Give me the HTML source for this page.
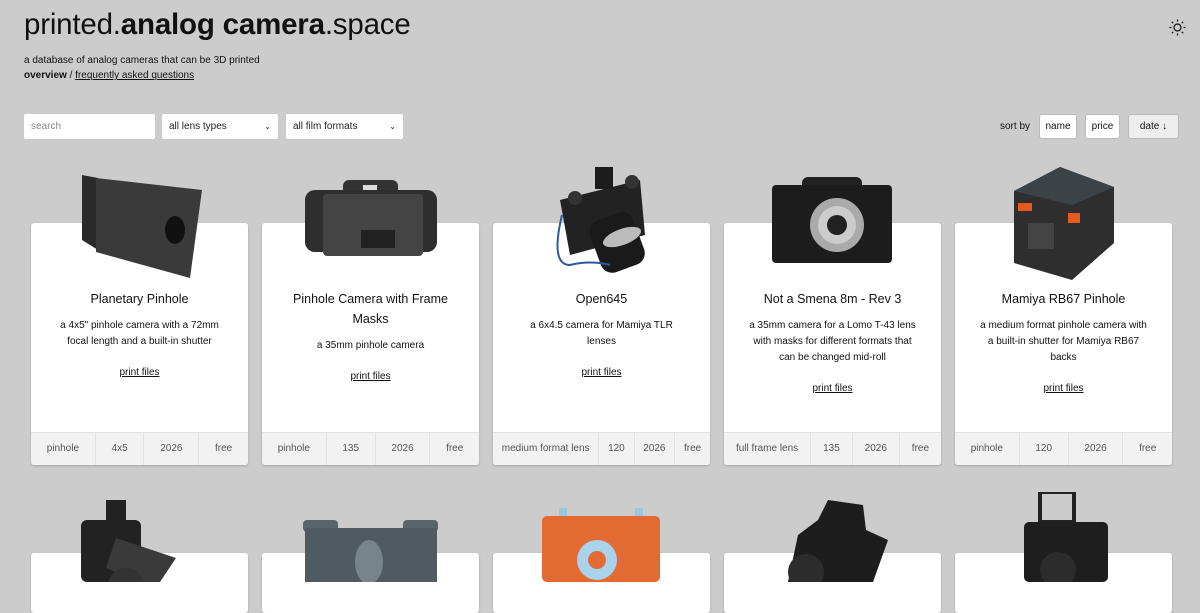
<!DOCTYPE html>
<html><head><meta charset="utf-8">
<style>
*{box-sizing:border-box;margin:0;padding:0}
body{width:1200px;height:582px;overflow:hidden;background:#cccccc;font-family:"Liberation Sans",sans-serif;color:#111;position:relative}
h1{position:absolute;left:24px;top:8px;font-size:29.5px;font-weight:normal;letter-spacing:-0.2px;color:#111}
h1 b{font-weight:bold}
.sub{position:absolute;left:24px;top:55px;font-size:10px}
.nav{position:absolute;left:24px;top:70px;font-size:10px}
.nav a{color:#111}
.in{position:absolute;top:114px;height:25px;background:#fff;border-radius:2px;font-size:10px;line-height:25px;padding-left:7px;color:#222}
.in.s{color:#888}
.in .ch{position:absolute;right:7px;top:0;font-size:8px}
.sort{position:absolute;top:114px;height:25px;font-size:10px;line-height:25px}
.btn{position:absolute;top:114px;height:25px;background:#fff;border-radius:3px;font-size:10px;line-height:23px;text-align:center;border:1px solid #bbb}
.card{position:absolute;width:217px;background:#fff;border-radius:3px;box-shadow:0 1px 2px rgba(0,0,0,.2)}
.r1{top:223px;height:242px}
.r2{top:553px;height:60px}
.t{position:absolute;left:10px;right:10px;top:66px;text-align:center;font-size:12.5px;line-height:20px}
.d{text-align:center;font-size:10px;line-height:16px;margin-top:9px;padding:0 14px}
.p{text-align:center;font-size:10px;margin-top:13px}
.p a{color:#111}
.f{position:absolute;left:0;right:0;bottom:0;height:33px;background:#f2f2f2;border-top:1px solid #e2e2e2;display:flex;font-size:10px;color:#555;border-radius:0 0 3px 3px}
.f span{flex:auto;text-align:center;line-height:31px;border-left:1px solid #e2e2e2}
.f span:first-child{border-left:none}
svg.cam{position:absolute}
</style></head><body>
<h1>printed.<b>analog camera</b>.space</h1>
<div class="sub">a database of analog cameras that can be 3D printed</div>
<div class="nav"><b>overview</b> / <a href="#">frequently asked questions</a></div>
<svg style="position:absolute;left:1169px;top:19px" width="17" height="17" viewBox="0 0 17 17"><circle cx="8.5" cy="8.5" r="3.5" fill="none" stroke="#111" stroke-width="1.2"/><g stroke="#111" stroke-width="1.2"><path d="M8.5 0.5v2M8.5 14.5v2M0.5 8.5h2M14.5 8.5h2M2.8 2.8l1.4 1.4M12.8 12.8l1.4 1.4M2.8 14.2l1.4-1.4M12.8 4.2l1.4-1.4"/></g></svg>
<div class="in s" style="left:24px;width:131px">search</div>
<div class="in" style="left:162px;width:116px">all lens types<span class="ch">&#8964;</span></div>
<div class="in" style="left:286px;width:117px">all film formats<span class="ch">&#8964;</span></div>
<div class="sort" style="left:1000px">sort by</div>
<div class="btn" style="left:1039px;width:38px">name</div>
<div class="btn" style="left:1085px;width:35px">price</div>
<div class="btn" style="left:1128px;width:51px;background:#eee">date &#8595;</div>

<div class="card r1" style="left:31px"><div class="t">Planetary Pinhole<div class="d">a 4x5" pinhole camera with a 72mm focal length and a built-in shutter</div><div class="p"><a href="#">print files</a></div></div><div class="f"><span>pinhole</span><span>4x5</span><span>2026</span><span>free</span></div></div>
<div class="card r1" style="left:262px"><div class="t" style="left:28px;right:28px">Pinhole Camera with Frame Masks<div class="d">a 35mm pinhole camera</div><div class="p"><a href="#">print files</a></div></div><div class="f"><span>pinhole</span><span>135</span><span>2026</span><span>free</span></div></div>
<div class="card r1" style="left:493px"><div class="t">Open645<div class="d">a 6x4.5 camera for Mamiya TLR lenses</div><div class="p"><a href="#">print files</a></div></div><div class="f"><span>medium format lens</span><span>120</span><span>2026</span><span>free</span></div></div>
<div class="card r1" style="left:724px"><div class="t">Not a Smena 8m - Rev 3<div class="d">a 35mm camera for a Lomo T-43 lens with masks for different formats that can be changed mid-roll</div><div class="p"><a href="#">print files</a></div></div><div class="f"><span>full frame lens</span><span>135</span><span>2026</span><span>free</span></div></div>
<div class="card r1" style="left:955px"><div class="t">Mamiya RB67 Pinhole<div class="d">a medium format pinhole camera with a built-in shutter for Mamiya RB67 backs</div><div class="p"><a href="#">print files</a></div></div><div class="f"><span>pinhole</span><span>120</span><span>2026</span><span>free</span></div></div>

<div class="card r2" style="left:31px"></div>
<div class="card r2" style="left:262px"></div>
<div class="card r2" style="left:493px"></div>
<div class="card r2" style="left:724px"></div>
<div class="card r2" style="left:955px"></div>

<svg class="cam" style="left:80px;top:170px" width="126" height="108"><polygon points="2,5 18,8 18,80 2,70" fill="#2a2a2a"/><polygon points="16,8 122,20 110,108 16,82" fill="#3a3a3a"/><ellipse cx="95" cy="60" rx="10" ry="14" fill="#111"/></svg>
<svg class="cam" style="left:303px;top:180px" width="136" height="80"><rect x="40" y="0" width="55" height="20" rx="6" fill="#333"/><rect x="60" y="5" width="14" height="8" fill="#ddd"/><rect x="2" y="10" width="132" height="62" rx="10" fill="#2e2e2e"/><rect x="20" y="14" width="100" height="62" rx="4" fill="#444"/><rect x="58" y="50" width="34" height="18" fill="#222"/></svg>
<svg class="cam" style="left:550px;top:165px" width="110" height="112"><polygon points="10,35 90,15 95,70 20,90" fill="#222"/><rect x="45" y="2" width="18" height="22" fill="#1c1c1c"/><circle cx="25" cy="33" r="7" fill="#333"/><circle cx="82" cy="17" r="7" fill="#333"/><rect x="44" y="50" width="46" height="55" rx="12" fill="#1a1a1a" transform="rotate(-20 67 77)"/><ellipse cx="72" cy="72" rx="20" ry="8" fill="#bbb" transform="rotate(-20 72 72)"/><path d="M12 50 Q0 100 20 100 Q40 95 60 100" fill="none" stroke="#2c5aa0" stroke-width="2"/></svg>
<svg class="cam" style="left:772px;top:177px" width="120" height="92"><rect x="30" y="0" width="60" height="18" rx="6" fill="#222"/><rect x="0" y="8" width="120" height="78" rx="4" fill="#1c1c1c"/><circle cx="65" cy="48" r="27" fill="#aaa"/><circle cx="65" cy="48" r="19" fill="#ccc"/><circle cx="65" cy="48" r="10" fill="#222"/></svg>
<svg class="cam" style="left:1010px;top:163px" width="106" height="118"><polygon points="4,28 50,4 104,24 104,80 62,117 4,100" fill="#2e2e2e"/><polygon points="4,28 50,4 104,24 62,42" fill="#3b4346"/><rect x="8" y="40" width="14" height="8" fill="#e85a1a"/><rect x="58" y="50" width="12" height="10" fill="#e85a1a"/><rect x="18" y="60" width="26" height="26" fill="#444"/></svg>
<svg class="cam" style="left:76px;top:498px" width="110" height="84"><rect x="30" y="2" width="20" height="28" fill="#222"/><rect x="5" y="22" width="60" height="62" rx="6" fill="#222"/><polygon points="40,40 100,60 80,90 30,70" fill="#3a3a3a"/><circle cx="50" cy="88" r="18" fill="#333"/></svg>
<svg class="cam" style="left:303px;top:520px" width="136" height="62"><rect x="0" y="0" width="35" height="12" rx="4" fill="#58656a"/><rect x="100" y="0" width="35" height="12" rx="4" fill="#58656a"/><rect x="2" y="8" width="132" height="54" fill="#4f5b60"/><ellipse cx="66" cy="42" rx="14" ry="22" fill="#77848a"/></svg>
<svg class="cam" style="left:541px;top:508px" width="120" height="74"><rect x="18" y="0" width="8" height="12" fill="#9cc7e0"/><rect x="94" y="0" width="8" height="12" fill="#9cc7e0"/><rect x="1" y="8" width="118" height="66" rx="5" fill="#e26b34"/><circle cx="56" cy="52" r="20" fill="#a9d3ea"/><circle cx="56" cy="52" r="9" fill="#e26b34"/></svg>
<svg class="cam" style="left:778px;top:500px" width="110" height="82"><polygon points="50,0 85,5 88,30 110,40 95,82 10,82 20,35 40,20" fill="#1d1d1d"/><circle cx="28" cy="72" r="18" fill="#2c2c2c"/></svg>
<svg class="cam" style="left:1018px;top:492px" width="96" height="90"><rect x="22" y="0" width="34" height="30" fill="none" stroke="#222" stroke-width="4"/><rect x="6" y="30" width="84" height="60" rx="5" fill="#1e1e1e"/><circle cx="40" cy="78" r="18" fill="#2c2c2c"/></svg>
</body></html>
